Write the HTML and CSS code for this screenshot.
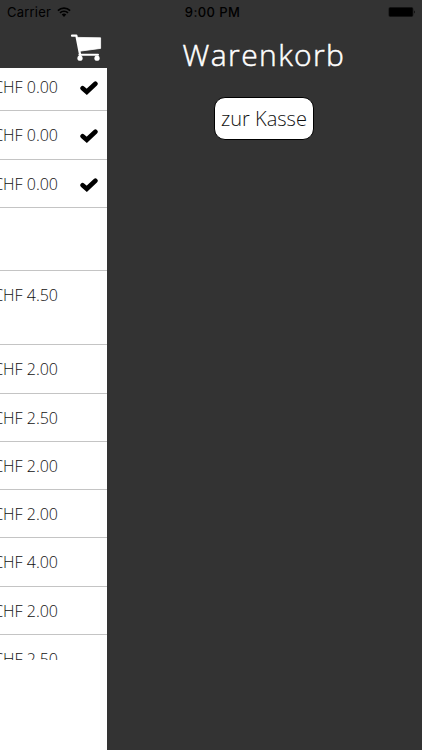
FILE: index.html
```
<!DOCTYPE html>
<html lang="de">
<head>
  <meta charset="UTF-8">
  <title>Warenkorb</title>
  <meta name="viewport" content="width=device-width, initial-scale=1.0">
  <link rel="stylesheet" href="styles.css">
</head>
<body>

  <div class="statusbar">
    <div class="carrier">
      <span>Carrier</span>
      <svg class="wifi" viewBox="0 0 14 10">
        <path d="M0.9 3.6a8.7 8.7 0 0 1 12.2 0M3 5.9a5.7 5.7 0 0 1 8 0" fill="none" stroke="#000" stroke-width="1.7"/>
        <path d="M4.7 7.6a3.3 3.3 0 0 1 4.6 0L7 10z"/>
      </svg>
    </div>
    <div class="time">9:00 PM</div>
    <svg class="battery" viewBox="0 0 28 12">
      <rect x="0.4" y="0.9" width="25" height="10.2" rx="2" fill="#1b1b1b"/>
      <rect x="1.2" y="1.7" width="23.4" height="8.6" rx="1"/>
      <path d="M26 4.2q1.6 1.8 0 3.6z"/>
    </svg>
  </div>

  <div class="page">
    <div class="products">
      <div class="topbar">
        <svg class="cart" viewBox="0 0 32 28">
          <path d="M2 1.7H6.4L10.2 21.2" fill="none" stroke="#fff" stroke-width="2.2" stroke-linecap="round" stroke-linejoin="round"/>
          <path d="M7.4 3.4L30.6 3.8V14.4L9.6 17.2z" fill="#fff" stroke="#fff" stroke-width="0.8" stroke-linejoin="round"/>
          <path d="M9.4 20.8H28" fill="none" stroke="#fff" stroke-width="2" stroke-linecap="round"/>
          <circle cx="10" cy="24.2" r="2.6" fill="#fff"/>
          <circle cx="27" cy="24.2" r="2.6" fill="#fff"/>
        </svg>
      </div>
      <div class="list">
        <div class="row first"><span class="price">CHF 0.00</span><svg class="check" viewBox="0 0 18 14"><path d="M2.6 7.2L6.8 10.8L15.4 2.8"/></svg></div>
        <div class="row"><span class="price">CHF 0.00</span><svg class="check" viewBox="0 0 18 14"><path d="M2.6 7.2L6.8 10.8L15.4 2.8"/></svg></div>
        <div class="row"><span class="price">CHF 0.00</span><svg class="check" viewBox="0 0 18 14"><path d="M2.6 7.2L6.8 10.8L15.4 2.8"/></svg></div>
        <div class="row heading"></div>
        <div class="row tall"><span class="price">CHF 4.50</span></div>
        <div class="row"><span class="price">CHF 2.00</span></div>
        <div class="row"><span class="price">CHF 2.50</span></div>
        <div class="row"><span class="price">CHF 2.00</span></div>
        <div class="row"><span class="price">CHF 2.00</span></div>
        <div class="row"><span class="price">CHF 4.00</span></div>
        <div class="row"><span class="price">CHF 2.00</span></div>
        <div class="row"><span class="price">CHF 2.50</span></div>
      </div>
    </div>

    <div class="basket">
      <h1>Warenkorb</h1>
      <button class="checkout">zur Kasse</button>
    </div>
  </div>

</body>
</html>
```

FILE: styles.css
```
* {
  box-sizing: border-box;
}

body {
  margin: 0;
  height: 750px;
  overflow: hidden;
  display: flex;
  flex-direction: column;
  background-color: #333;
  font-family: "Open Sans", sans-serif;
  font-weight: 300;
}

.statusbar {
  height: 24px;
  flex: none;
  display: grid;
  grid-template-columns: 1fr auto 1fr;
  align-items: center;
  padding: 0 6px 0 7px;
  font-family: Inter, "Liberation Sans", sans-serif;
  font-size: 13px;
  font-weight: 400;
  color: #000;
}

.carrier {
  display: flex;
  align-items: center;
  gap: 6px;
  letter-spacing: 0.2px;
}

.wifi {
  width: 14px;
  height: 10px;
}

.time {
  padding-left: 2px;
  font-weight: 500;
  letter-spacing: 0.4px;
}

.battery {
  width: 28px;
  height: 12px;
  justify-self: end;
}

.page {
  flex: 1;
  display: flex;
}

.products {
  width: 107px;
  display: flex;
  flex-direction: column;
  background-color: #fff;
  overflow: hidden;
}

.topbar {
  height: 43.5px;
  flex: none;
  display: flex;
  justify-content: flex-end;
  padding: 9.5px 5px 0 0;
  background-color: #333;
}

.cart {
  width: 32px;
  height: 28px;
}

.list {
  height: 592.5px;
  overflow: hidden;
}

.row {
  height: 48.3px;
  display: flex;
  justify-content: flex-end;
  padding: 13px 9px 0 0;
  border-bottom: 1px solid #c4c4c4;
}

.row.first {
  height: 43.8px;
  padding-top: 8px;
}

.row.heading {
  height: 62.8px;
}

.row.tall {
  height: 74.6px;
}

.price {
  flex: none;
  margin-right: 40px;
  font-size: 16px;
  line-height: 22px;
  white-space: nowrap;
  color: #111;
}

.check {
  flex: none;
  width: 18px;
  height: 14px;
  margin: 5px 0 0 -18px;
}

.check path {
  fill: none;
  stroke: #000;
  stroke-width: 4.6;
  stroke-linecap: round;
}

.basket {
  flex: 1;
  display: flex;
  flex-direction: column;
  align-items: center;
  padding-right: 1px;
}

h1 {
  margin: 10px 0 0;
  font-size: 30px;
  line-height: 42px;
  font-weight: 300;
  letter-spacing: 1.4px;
  color: #fff;
  -webkit-text-stroke: 0.5px #fff;
}

.checkout {
  width: 100px;
  height: 43px;
  margin-top: 21px;
  padding: 0;
  border: 1px solid #000;
  border-radius: 11px;
  background-color: #fff;
  color: #111;
  font: 300 20px "Open Sans", sans-serif;
}
```
